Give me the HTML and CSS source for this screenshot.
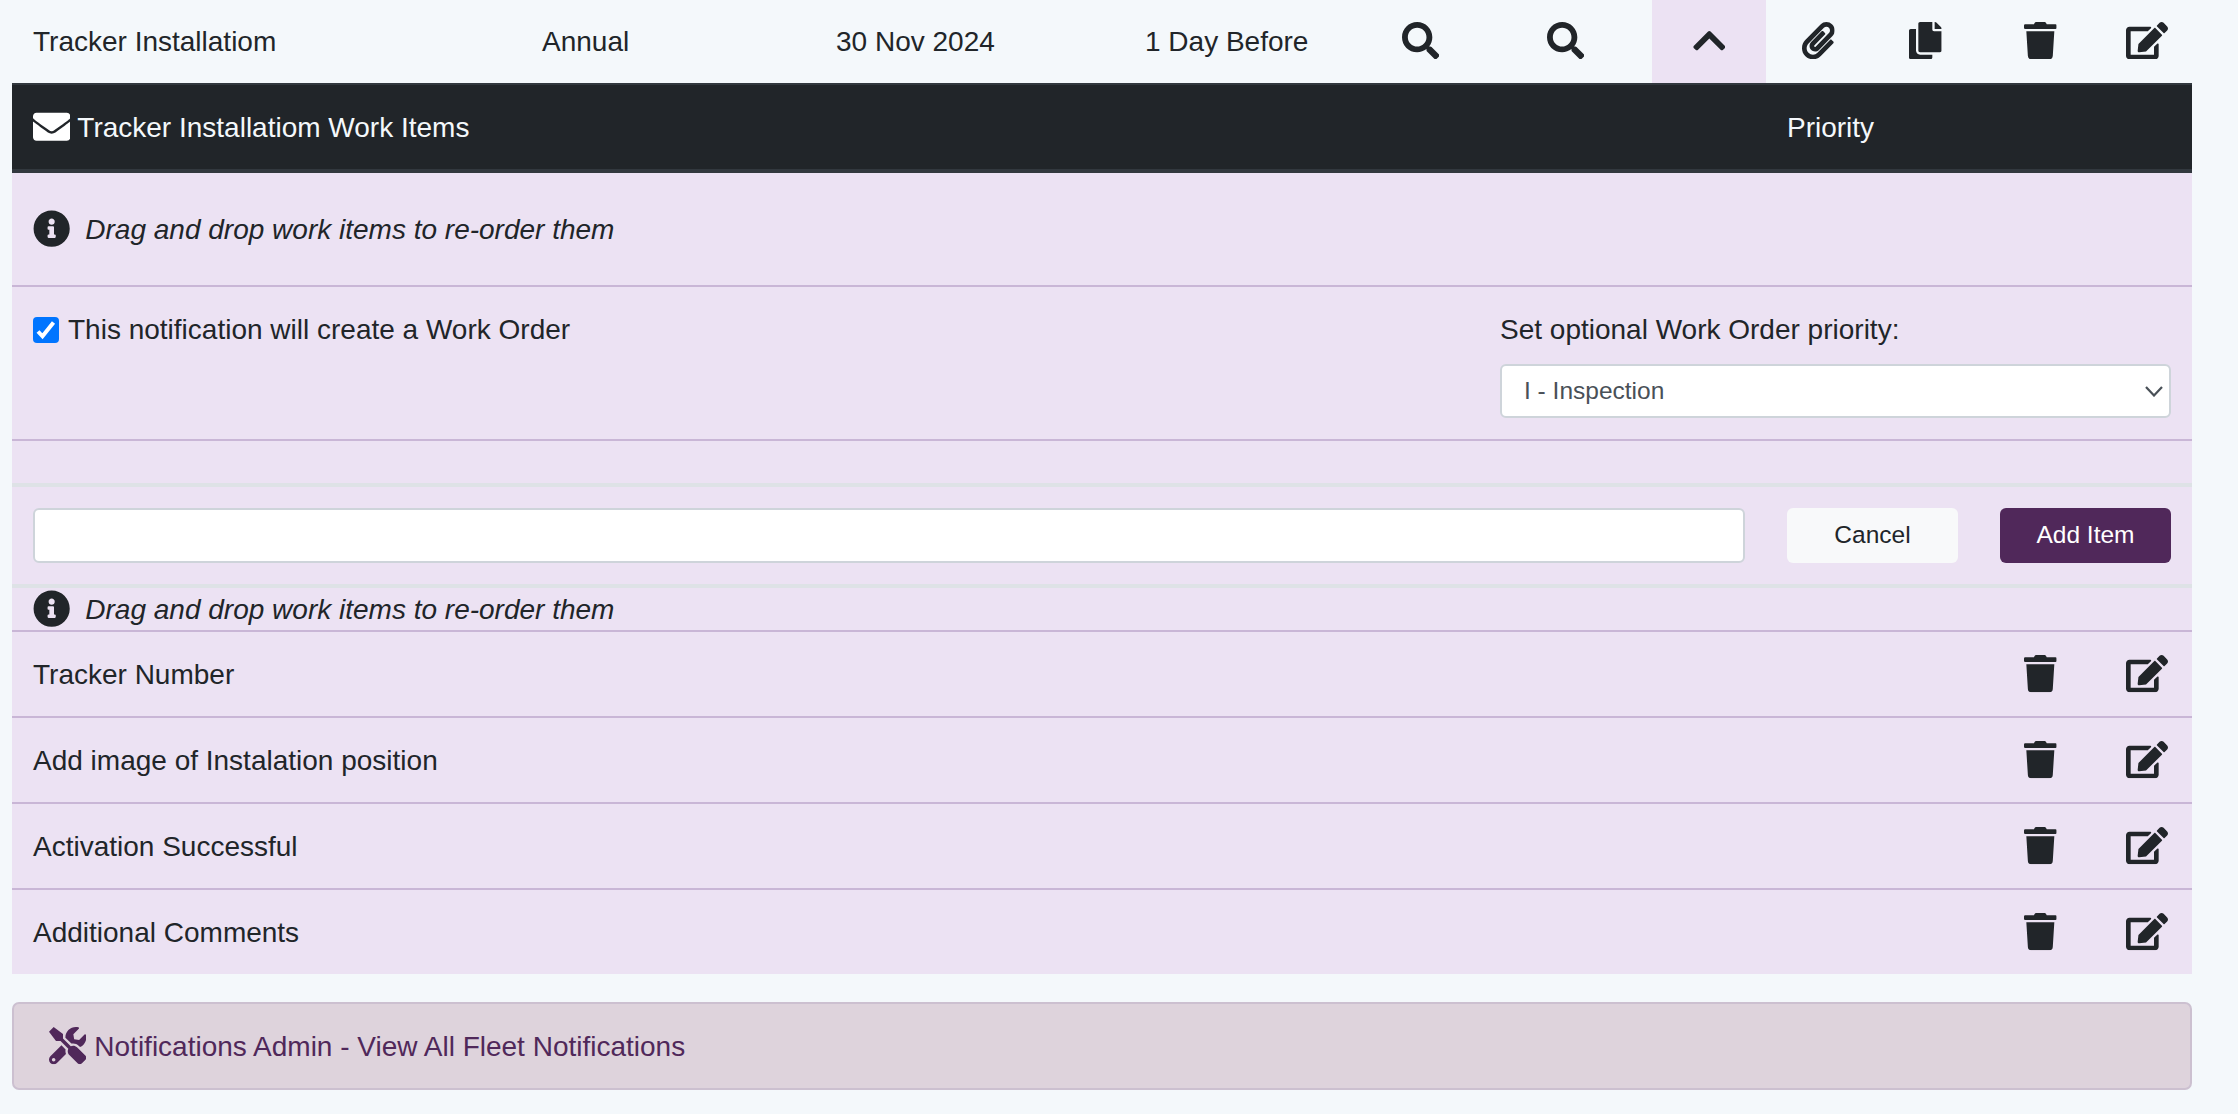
FILE: index.html
```html
<!DOCTYPE html>
<html lang="en">
<head>
<meta charset="utf-8">
<title>Fleet Notifications</title>
<link rel="stylesheet" href="styles.css">
</head>
<body>
<svg class="sprite" aria-hidden="true">
  <symbol id="search" viewBox="0 0 512 512"><path d="M505 442.7L405.3 343c-4.5-4.5-10.6-7-17-7H372c27.6-35.3 44-79.7 44-128C416 93.1 322.9 0 208 0S0 93.1 0 208s93.1 208 208 208c48.3 0 92.7-16.4 128-44v16.3c0 6.4 2.5 12.5 7 17l99.7 99.7c9.4 9.4 24.6 9.4 33.9 0l28.3-28.3c9.4-9.4 9.4-24.6.1-34zM208 336c-70.7 0-128-57.2-128-128 0-70.7 57.2-128 128-128 70.7 0 128 57.2 128 128 0 70.7-57.2 128-128 128z"/></symbol>
  <symbol id="chevron-up" viewBox="0 0 448 512"><path d="M240.971 130.524l194.343 194.343c9.373 9.373 9.373 24.569 0 33.941l-22.667 22.667c-9.357 9.357-24.522 9.375-33.901.04L224 227.495 69.255 381.516c-9.379 9.335-24.544 9.317-33.901-.04l-22.667-22.667c-9.373-9.373-9.373-24.569 0-33.941L207.03 130.525c9.372-9.373 24.568-9.373 33.941-.001z"/></symbol>
  <symbol id="paperclip" viewBox="0 0 448 512"><path d="M43.246 466.142c-58.43-60.289-57.341-157.511 1.386-217.581L254.392 34c44.316-45.332 116.351-45.336 160.671 0 43.89 44.894 43.943 117.329 0 162.276L232.214 383.128c-29.855 30.537-78.633 30.111-107.982-.998-28.275-29.97-27.368-77.473 1.452-106.953l143.743-146.835c6.182-6.314 16.312-6.422 22.626-.241l22.861 22.379c6.315 6.182 6.422 16.312.241 22.626L171.427 319.927c-4.932 5.045-5.236 13.428-.648 18.292 4.372 4.634 11.245 4.711 15.688.165l182.849-186.851c19.613-20.062 19.613-52.725-.011-72.798-19.189-19.627-49.957-19.637-69.154 0L90.39 293.295c-34.763 35.56-35.299 93.12-1.191 128.313 34.01 35.093 88.985 35.137 123.058.286l172.06-175.999c6.177-6.319 16.307-6.433 22.626-.256l22.877 22.364c6.319 6.177 6.434 16.307.256 22.626l-172.06 175.998c-59.576 60.938-155.943 60.216-214.77-.485z"/></symbol>
  <symbol id="copy" viewBox="0 0 448 512"><path d="M320 448v40c0 13.255-10.745 24-24 24H24c-13.255 0-24-10.745-24-24V120c0-13.255 10.745-24 24-24h72v296c0 30.879 25.121 56 56 56h168zm0-344V0H152c-13.255 0-24 10.745-24 24v368c0 13.255 10.745 24 24 24h272c13.255 0 24-10.745 24-24V128H344c-13.2 0-24-10.8-24-24zm120.971-31.029L375.029 7.029A24 24 0 0 0 358.059 0H352v96h96v-6.059a24 24 0 0 0-7.029-16.97z"/></symbol>
  <symbol id="trash" viewBox="0 0 448 512"><path d="M432 32H312l-9.4-18.7A24 24 0 0 0 281.1 0H166.8a23.72 23.72 0 0 0-21.4 13.3L136 32H16A16 16 0 0 0 0 48v32a16 16 0 0 0 16 16h416a16 16 0 0 0 16-16V48a16 16 0 0 0-16-16zM53.2 467a48 48 0 0 0 47.9 45h245.8a48 48 0 0 0 47.9-45L416 128H32z"/></symbol>
  <symbol id="edit" viewBox="0 0 576 512"><path d="M402.6 83.2l90.2 90.2c3.8 3.8 3.8 10 0 13.8L274.4 405.6l-92.8 10.3c-12.4 1.4-22.9-9.1-21.5-21.5l10.3-92.8L388.8 83.2c3.8-3.8 10-3.8 13.8 0zm162-22.9l-48.8-48.8c-15.2-15.2-39.9-15.2-55.2 0l-35.4 35.4c-3.8 3.8-3.8 10 0 13.8l90.2 90.2c3.8 3.8 10 3.8 13.8 0l35.4-35.4c15.2-15.3 15.2-40 0-55.2zM384 346.2V448H64V128h229.8c3.2 0 6.2-1.3 8.5-3.5l40-40c7.6-7.6 2.2-20.5-8.5-20.5H48C21.5 64 0 85.5 0 112v352c0 26.5 21.5 48 48 48h352c26.5 0 48-21.5 48-48V306.2c0-10.7-12.9-16-20.5-8.5l-40 40c-2.2 2.3-3.5 5.3-3.5 8.5z"/></symbol>
  <symbol id="envelope" viewBox="0 0 512 512"><path d="M502.3 190.8c3.9-3.1 9.7-.2 9.7 4.7V400c0 26.5-21.5 48-48 48H48c-26.5 0-48-21.5-48-48V195.6c0-5 5.7-7.8 9.7-4.7 22.4 17.4 52.1 39.5 154.1 113.6 21.1 15.4 56.7 47.8 92.2 47.6 35.7.3 72-32.8 92.3-47.6 102-74.1 131.6-96.3 154-113.7zM256 320c23.2.4 56.6-29.2 73.4-41.4 132.7-96.3 142.8-104.7 173.4-128.7 5.8-4.5 9.2-11.5 9.2-18.9v-19c0-26.5-21.5-48-48-48H48c-26.5 0-48 21.5-48 48v19c0 7.4 3.4 14.3 9.2 18.9 30.6 23.9 40.7 32.4 173.4 128.7 16.8 12.2 50.2 41.8 73.4 41.4z"/></symbol>
  <symbol id="info" viewBox="0 0 512 512"><path d="M256 8C119.043 8 8 119.083 8 256c0 136.997 111.043 248 248 248s248-111.003 248-248C504 119.083 392.957 8 256 8zm0 110c23.196 0 42 18.804 42 42s-18.804 42-42 42-42-18.804-42-42 18.804-42 42-42zm56 254c0 6.627-5.373 12-12 12h-88c-6.627 0-12-5.373-12-12v-24c0-6.627 5.373-12 12-12h12v-64h-12c-6.627 0-12-5.373-12-12v-24c0-6.627 5.373-12 12-12h64c6.627 0 12 5.373 12 12v100h12c6.627 0 12 5.373 12 12v24z"/></symbol>
  <symbol id="tools" viewBox="0 0 512 512"><path d="M501.1 395.7L384 278.6c-23.1-23.1-57.6-27.6-85.4-13.9L192 158.1V96L64 0 0 64l96 128h62.1l106.6 106.6c-13.6 27.8-9.2 62.3 13.9 85.4l117.1 117.1c14.6 14.6 38.2 14.6 52.7 0l52.7-52.7c14.5-14.6 14.5-38.2 0-52.7zM331.7 225c28.3 0 54.9 11 74.9 31l19.4 19.4c15.8-6.9 30.8-16.5 43.8-29.5 37.1-37.1 49.7-89.3 37.9-136.7-2.2-9-13.5-12.1-20.1-5.5l-74.4 74.4-67.9-11.3L334 98.9l74.4-74.4c6.6-6.6 3.4-17.9-5.7-20.2-47.4-11.7-99.6.9-136.6 37.9-28.5 28.5-41.9 66.1-41.2 103.6l82.1 82.1c8.1-1.9 16.5-2.9 24.7-2.9zm-103.9 82l-56.7-56.7L18.7 402.8c-25 25-25 65.5 0 90.5s65.5 25 90.5 0l123.6-123.6c-7.6-19.9-9.9-41.6-5-62.7zM64 472c-13.2 0-24-10.8-24-24 0-13.3 10.7-24 24-24s24 10.7 24 24c0 13.2-10.7 24-24 24z"/></symbol>
</svg>

<main class="page">
  <div class="summary">
    <div class="cell"><span class="text">Tracker Installatiom</span></div>
    <div class="cell"><span class="text">Annual</span></div>
    <div class="cell"><span class="text">30 Nov 2024</span></div>
    <div class="cell"><span class="text">1 Day Before</span></div>
    <div class="cell"><svg class="icon"><use href="#search"/></svg></div>
    <div class="cell"><svg class="icon"><use href="#search"/></svg></div>
    <div class="cell cell-open"><svg class="icon icon-narrow"><use href="#chevron-up"/></svg></div>
    <div class="cell"><svg class="icon icon-narrow"><use href="#paperclip"/></svg></div>
    <div class="cell"><svg class="icon icon-narrow"><use href="#copy"/></svg></div>
    <div class="cell"><svg class="icon icon-narrow"><use href="#trash"/></svg></div>
    <div class="cell"><svg class="icon icon-wide"><use href="#edit"/></svg></div>
  </div>

  <section class="panel">
    <header class="panel-head">
      <div class="panel-title"><svg class="icon"><use href="#envelope"/></svg><span class="text">Tracker Installatiom Work Items</span></div>
      <div class="panel-priority text">Priority</div>
    </header>
    <div class="hint hint-tall"><svg class="icon"><use href="#info"/></svg><em class="text">Drag and drop work items to re-order them</em></div>
    <div class="settings">
      <label class="create"><span class="checkbox"><svg viewBox="0 0 26 26"><path d="M5 14.5l4.500 4.800L20.500 5.500"/></svg></span><span>This notification will create a Work Order</span></label>
      <div class="priority">
        <div class="priority-label">Set optional Work Order priority:</div>
        <div class="select"><span>I - Inspection</span><svg class="caret" viewBox="0 0 18 11"><path d="M1 1l8 8.500L17 1"/></svg></div>
      </div>
    </div>
    <div class="spacer"></div>
    <div class="add">
      <input class="field" type="text" aria-label="Work item">
      <button class="btn btn-light">Cancel</button>
      <button class="btn btn-primary">Add Item</button>
    </div>
    <div class="hint hint-short"><svg class="icon"><use href="#info"/></svg><em class="text">Drag and drop work items to re-order them</em></div>
    <div class="item"><span class="item-name text">Tracker Number</span><svg class="icon icon-narrow"><use href="#trash"/></svg><svg class="icon icon-wide"><use href="#edit"/></svg></div>
    <div class="item"><span class="item-name text">Add image of Instalation position</span><svg class="icon icon-narrow"><use href="#trash"/></svg><svg class="icon icon-wide"><use href="#edit"/></svg></div>
    <div class="item"><span class="item-name text">Activation Successful</span><svg class="icon icon-narrow"><use href="#trash"/></svg><svg class="icon icon-wide"><use href="#edit"/></svg></div>
    <div class="item"><span class="item-name text">Additional Comments</span><svg class="icon icon-narrow"><use href="#trash"/></svg><svg class="icon icon-wide"><use href="#edit"/></svg></div>
  </section>

  <a class="admin"><svg class="icon"><use href="#tools"/></svg><span class="text">Notifications Admin - View All Fleet Notifications</span></a>
</main>
</body>
</html>
```

FILE: styles.css
```css
* { box-sizing: border-box; }

body {
  margin: 0;
  background: #f4f8fb;
  color: #212529;
  font: 28px/42px "Liberation Sans", Arial, sans-serif;
}

.sprite { display: none; }

.page { width: 2180px; margin-left: 12px; }

.text { padding-top: 2px; }

.icon { display: block; flex: none; width: 37.33px; height: 37.33px; fill: currentColor; }
.icon-narrow { width: 32.67px; }
.icon-wide { width: 42px; }

.summary {
  display: grid;
  grid-template-columns: 509px 294px 309px 257px 145px 126px 129px 107px 115px 102px 87px;
  height: 83px;
}
.cell { display: flex; align-items: center; padding: 0 0 2px 21px; white-space: nowrap; }
.cell-open { width: 114px; padding-left: 0; justify-content: center; background: #ece2f3; }

.panel { background: #ece2f3; }

.panel-head {
  display: flex;
  align-items: center;
  height: 90px;
  padding: 0 21px;
  border-top: 2px solid #32383e;
  border-bottom: 4px solid #32383e;
  background: #212529;
  color: #f4f8fb;
}
.panel-title { display: flex; align-items: center; gap: 7px; flex: 1; }
.panel-title .icon { color: #fff; }
.panel-priority { width: 384px; }

.hint { display: flex; align-items: center; gap: 15px; padding-left: 21px; border-bottom: 2px solid #c9b6d6; }
.hint-tall { height: 114px; }
.hint-short { height: 44px; }

.settings {
  display: flex;
  justify-content: space-between;
  height: 154px;
  padding: 22px 21px 0;
  border-bottom: 2px solid #c9b6d6;
}
.create { display: flex; align-items: center; gap: 9px; height: 42px; }
.checkbox { width: 26px; height: 26px; border-radius: 4px; background: #0075ff; }
.checkbox svg { display: block; fill: none; stroke: #fff; stroke-width: 4; }
.priority { width: 671px; }
.select {
  display: flex;
  align-items: center;
  justify-content: space-between;
  height: 54px;
  margin-top: 13px;
  padding: 0 6px 0 22px;
  border: 2px solid #ced4da;
  border-radius: 6px;
  background: #fff;
  color: #495057;
  font-size: 24.5px;
}
.caret { width: 18px; height: 11px; fill: none; stroke: #495057; stroke-width: 2.2; }

.spacer { height: 42px; }

.add {
  display: flex;
  align-items: center;
  gap: 42px;
  height: 105px;
  padding: 0 21px;
  border-top: 4px solid #dee2e6;
  border-bottom: 4px solid #dee2e6;
}
.field {
  flex: 1;
  height: 55px;
  border: 2px solid #ced4da;
  border-radius: 6px;
  background: #fff;
}
.btn { width: 171px; height: 55px; padding: 0 0 2px; border: 0; border-radius: 6px; font: 24.5px "Liberation Sans", Arial, sans-serif; }
.btn-light { background: #f8f9fa; color: #212529; }
.btn-primary { background: #50285a; color: #fff; }

.item { display: flex; align-items: center; height: 86px; padding: 0 24px 0 21px; border-bottom: 2px solid #c9b6d6; }
.item:last-child { height: 84px; border-bottom: 0; }
.item-name { flex: 1; }
.item .icon-narrow { margin-right: 69px; }

.admin {
  display: flex;
  align-items: center;
  gap: 8px;
  height: 88px;
  margin-top: 28px;
  padding-left: 35px;
  border: 2px solid #ccc0d0;
  border-radius: 7px;
  background: #ded3dc;
  color: #50285a;
}
```
